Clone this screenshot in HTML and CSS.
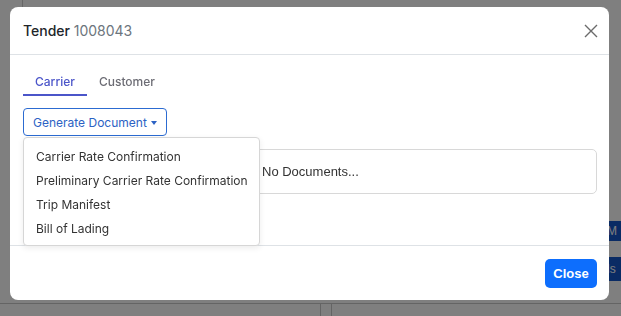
FILE: index.html
```html
<!DOCTYPE html>
<html lang="en">
<head>
    <meta charset="UTF-8">
    <meta name="viewport" content="width=device-width, initial-scale=1.0">
    <title>Tender 1008043</title>
    <link rel="stylesheet" href="styles.css">
</head>
<body>
    <div class="page">
        <div class="page-top"></div>
        <div class="page-side">
            <div class="side-btn">M</div>
            <div class="side-btn side-btn-low">ls</div>
        </div>
        <div class="page-bottom">
            <div class="cell cell-a"></div>
            <div class="cell cell-b"></div>
        </div>
    </div>
    <div class="backdrop"></div>

    <div class="modal">
        <div class="modal-header">
            <h5 class="modal-title">Tender <span class="tender-no">1008043</span></h5>
            <button class="close-x" aria-label="Close">
                <svg width="14" height="14" viewBox="0 0 14 14"><path d="M1 1 L13 13 M13 1 L1 13" stroke="#6b6b6b" stroke-width="1.4" fill="none"/></svg>
            </button>
        </div>
        <div class="modal-body">
            <div class="tabs">
                <div class="tab active">Carrier</div>
                <div class="tab">Customer</div>
            </div>
            <div class="doc-actions">
                <button class="btn-outline">Generate Document <span class="caret"></span></button>
                <ul class="dropdown">
                    <li>Carrier Rate Confirmation</li>
                    <li>Preliminary Carrier Rate Confirmation</li>
                    <li>Trip Manifest</li>
                    <li>Bill of Lading</li>
                </ul>
            </div>
            <div class="doc-box">
                <div class="doc-list"></div>
                <div class="doc-empty">No Documents...</div>
            </div>
            <div class="btn-hidden"></div>
        </div>
        <div class="modal-footer">
            <button class="btn-close">Close</button>
        </div>
    </div>
</body>
</html>
```

FILE: styles.css
```css
body {
    margin: 0;
    width: 621px;
    height: 316px;
    overflow: hidden;
    background-color: #ffffff;
    font-family: 'Inter', 'Liberation Sans', sans-serif;
    position: relative;
}

/* page behind the modal */
.page {
    height: 316px;
    display: flex;
    flex-direction: column;
}
.page-top {
    height: 20px;
    border-left: 1px solid #ccc;
    margin-left: 22px;
}
.page-side {
    flex-grow: 1;
    display: flex;
    flex-direction: column;
    align-items: flex-end;
    padding-top: 201px;
    border-bottom: 1px solid #c8c8c8;
}
.side-btn {
    width: 16px;
    height: 20px;
    background-color: #1556c8;
    color: #fff;
    font-size: 12px;
    line-height: 20px;
    padding-left: 2px;
    box-sizing: border-box;
    font-family: 'Liberation Sans', sans-serif;
}
.side-btn-low {
    margin-top: 16px;
    height: 24px;
    line-height: 24px;
}
.page-bottom {
    height: 12px;
    display: flex;
}
.cell {
    border-right: 1px solid #c8c8c8;
}
.cell-a {
    width: 320px;
}
.cell-b {
    width: 10px;
}
.backdrop {
    position: fixed;
    inset: 0;
    background-color: rgba(0, 0, 0, 0.5);
}

/* modal */
.modal {
    position: fixed;
    top: 7px;
    left: 10px;
    width: 599px;
    height: 293px;
    background-color: #fff;
    border-radius: 8px;
    display: flex;
    flex-direction: column;
}
.modal-header {
    height: 47px;
    border-bottom: 1px solid #dee2e6;
    display: flex;
    align-items: center;
    justify-content: space-between;
    padding: 0 11px 0 13px;
}
.modal-title {
    margin: 0;
    font-size: 14px;
    font-weight: 500;
    color: #212529;
}
.tender-no {
    font-weight: 400;
    color: #6c757d;
}
.close-x {
    border: none;
    background: none;
    padding: 0;
    width: 14px;
    height: 14px;
    display: flex;
}
.modal-body {
    flex-grow: 1;
    padding: 13px 12px 0 13px;
    position: relative;
}
.tabs {
    display: flex;
    height: 28px;
    font-size: 12px;
    font-weight: 500;
}
.tab {
    padding: 0 12px;
    line-height: 27px;
    color: #6c6c74;
}
.tab.active {
    color: #4b55c9;
    border-bottom: 2px solid #4b55c9;
}
.doc-actions {
    margin-top: 12px;
    position: relative;
    z-index: 2;
}
.btn-outline {
    height: 28px;
    padding: 0 9px;
    border: 1px solid #2c6bd1;
    border-radius: 4px;
    background: #fff;
    color: #2c62c4;
    font-family: 'Inter', sans-serif;
    font-size: 12px;
}
.caret {
    display: inline-block;
    border-top: 4px solid #2c62c4;
    border-left: 3px solid transparent;
    border-right: 3px solid transparent;
    vertical-align: 2px;
    margin-left: 1px;
}
.dropdown {
    position: absolute;
    top: 29px;
    left: 0;
    width: 237px;
    height: 109px;
    box-sizing: border-box;
    margin: 0;
    padding: 7px 0 0;
    list-style: none;
    background: #fff;
    border: 1px solid #d6d6d6;
    border-radius: 4px;
    box-shadow: 0 2px 6px rgba(0, 0, 0, 0.08);
}
.dropdown li {
    height: 24px;
    line-height: 24px;
    padding: 0 12px;
    font-size: 12px;
    white-space: nowrap;
    color: #333;
}
.doc-box {
    margin-top: 13px;
    height: 43px;
    border: 1px solid #d8d8d8;
    border-radius: 5px;
    display: flex;
    align-items: center;
}
.doc-list {
    width: 238px;
}
.doc-empty {
    font-size: 13px;
    color: #333;
    font-family: 'Liberation Sans', sans-serif;
}
.btn-hidden {
    margin-top: 15px;
    height: 25px;
    width: 80px;
    border-radius: 3px;
    background: #1556c8;
}
.modal-footer {
    height: 54px;
    border-top: 1px solid #dee2e6;
    display: flex;
    align-items: center;
    justify-content: flex-end;
    padding: 0 12px;
}
.btn-close {
    width: 52px;
    height: 29px;
    border: none;
    border-radius: 5px;
    background-color: #0d6efd;
    color: #fff;
    font-family: 'Liberation Sans', sans-serif;
    font-size: 13px;
    font-weight: 700;
    padding: 0;
}
```
